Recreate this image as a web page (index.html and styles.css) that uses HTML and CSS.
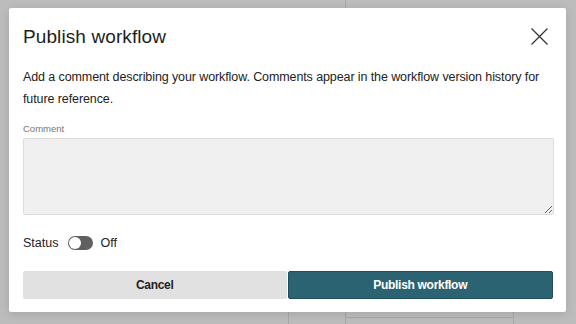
FILE: index.html
```html
<!DOCTYPE html>
<html>
<head>
<meta charset="utf-8">
<link rel="stylesheet" href="styles.css">
</head>
<body>
<div class="backdrop">
  <div class="bg-line bg-v1"></div>
  <div class="bg-line bg-v2"></div>
  <div class="bg-line bg-v3"></div>
  <div class="bg-line bg-h1"></div>
</div>
<div class="modal">
  <div class="modal-header">
    <h1 class="modal-title">Publish workflow</h1>
    <button class="close-btn" aria-label="Close">
      <svg width="17" height="17" viewBox="0 0 17 17"><path d="M0.5 0.5L16.5 16.5M16.5 0.5L0.5 16.5" stroke="#333" stroke-width="1.2" fill="none"/></svg>
    </button>
  </div>
  <p class="desc">Add a comment describing your workflow. Comments appear in the workflow version history for future reference.</p>
  <label class="field-label">Comment</label>
  <textarea class="comment"></textarea>
  <div class="status-row">
    <span class="status-label">Status</span>
    <span class="toggle"><span class="knob"></span></span>
    <span class="status-value">Off</span>
  </div>
  <div class="actions">
    <button class="btn btn-cancel">Cancel</button>
    <button class="btn btn-primary">Publish workflow</button>
  </div>
</div>
</body>
</html>
```
FILE: styles.css
```css
html, body {
  margin: 0;
  padding: 0;
  width: 576px;
  height: 324px;
  overflow: hidden;
}
body {
  background: #bcbcbc;
  font-family: "Liberation Sans", Arial, sans-serif;
  color: #222;
  position: relative;
}
.backdrop {
  position: absolute;
  inset: 0;
}
.bg-line {
  position: absolute;
  background: #a8a8a8;
}
.bg-v1 { left: 345px; top: 0; width: 1px; height: 324px; }
.bg-v2 { left: 288px; top: 312px; width: 1px; height: 12px; }
.bg-v3 { left: 513px; top: 312px; width: 1px; height: 12px; }
.bg-h1 { left: 345px; top: 317px; width: 168px; height: 1px; }
.modal {
  position: absolute;
  left: 9px;
  top: 8px;
  width: 530px;
  height: 304px;
  padding: 0 13px 0 14px;
  background: #fff;
  border-radius: 2px;
  box-shadow: 0 2px 10px rgba(0,0,0,0.12);
  display: flex;
  flex-direction: column;
}
.modal-header {
  display: flex;
  align-items: center;
  justify-content: space-between;
  height: 58px;
}
.modal-title {
  margin: 0;
  font-size: 19px;
  font-weight: 400;
  color: #1e1e1e;
  letter-spacing: 0.1px;
}
.close-btn {
  border: 0;
  background: none;
  padding: 0;
  margin: -2px 5px 0 0;
  width: 17px;
  height: 17px;
  display: block;
}
.desc {
  margin: 0;
  font-size: 12.5px;
  letter-spacing: -0.1px;
  line-height: 22px;
  color: #222;
}
.field-label {
  display: block;
  margin-top: 13px;
  font-size: 9.5px;
  color: #777;
  line-height: 12px;
}
.comment {
  margin-top: 3px;
  height: 77px;
  box-sizing: border-box;
  width: 531px;
  background: #f0f0f0;
  border: 1px solid #dcdcdc;
  border-radius: 2px;
  resize: vertical;
  font-family: inherit;
}
.status-row {
  display: flex;
  align-items: center;
  margin-top: 20px;
  height: 16px;
  font-size: 12.5px;
  color: #222;
}
.toggle {
  width: 25px;
  height: 14px;
  border-radius: 7px;
  background: #606060;
  margin: 0 7px 0 10px;
  position: relative;
  display: inline-block;
}
.knob {
  position: absolute;
  left: 1px;
  top: 1px;
  width: 12px;
  height: 12px;
  border-radius: 50%;
  background: #fff;
}
.actions {
  display: flex;
  margin-top: 20px;
}
.btn {
  flex: 1;
  height: 28px;
  border: 0;
  border-radius: 2px;
  font-family: inherit;
  font-size: 12px;
  letter-spacing: -0.3px;
  font-weight: 700;
}
.btn-cancel {
  background: #e1e1e1;
  color: #222;
}
.btn-primary {
  background: #2c6373;
  color: #fff;
  border: 1px solid #1f4f5d;
  margin-left: 1px;
}
```
